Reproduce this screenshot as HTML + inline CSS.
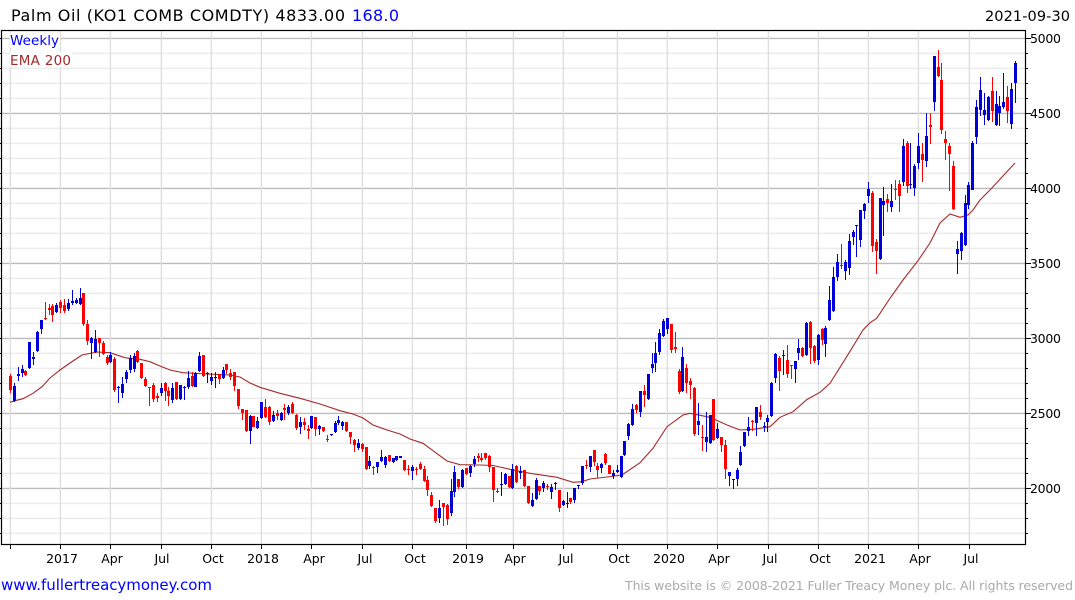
<!DOCTYPE html>
<html><head><meta charset="utf-8"><title>Palm Oil</title>
<style>html,body{margin:0;padding:0;background:#fff;width:1075px;height:600px;overflow:hidden}svg{display:block}text{font-family:"DejaVu Sans","Liberation Sans",sans-serif}</style>
</head><body>
<svg id="c" xmlns="http://www.w3.org/2000/svg" width="1075" height="600" viewBox="0 0 1075 600">
<g id="grid"></g>
<rect x="10" y="33" width="50" height="15" fill="#fff"/>
<rect x="10" y="52" width="62" height="15" fill="#fff"/>
<polyline id="ema" fill="none" stroke="#a52a2a" stroke-width="1.1" points="10,402.3 15,400.7 23,398.7 33,393.3 42,386.7 50,378 60,370 70,363 82,355 97,352 110,352.7 125,357.7 140,359.3 150,361.7 160,366 170,370 183,372.7 207,374 230,375 240,377 250,383 260,387.3 280,393.3 300,398.3 320,404 340,410.7 353,414 363,418 373,425 387,430 400,434 410,439 423,443.3 433,450.7 447,461 460,464.7 480,465 493,465.5 513,470 530,473.3 557,477.3 573,482.3 582,481.7 590,479 607,477 622,475 640,462.7 653,448.3 667,426.7 683,415 690,413.3 710,417.3 727,425 740,430 753,429.3 770,426.7 780,417.3 793,411.7 807,399.5 820,392.3 830,383.3 846.7,356.7 863,330 870,322.7 876.7,318.3 890,298.3 903,280 918,260.7 930,243 940,223 950,214 960,217.3 968,215 973,210 980,200 990,190 1015,163"/>
<g id="cand" shape-rendering="crispEdges"></g>
<rect x="1.5" y="30.5" width="1024" height="514" fill="none" stroke="#000" stroke-width="1.2"/>
<g id="ticks" stroke="#000" stroke-width="1" shape-rendering="crispEdges"></g>
<text x="11" y="21" font-size="16" textLength="334" lengthAdjust="spacing" fill="#000">Palm Oil (KO1 COMB COMDTY) 4833.00</text>
<text x="352" y="21" font-size="16" textLength="47" lengthAdjust="spacing" fill="#0000ff">168.0</text>
<text x="985" y="21" font-size="14.5" textLength="85" lengthAdjust="spacing" fill="#000">2021-09-30</text>
<text x="10" y="45" font-size="13.5" textLength="49" lengthAdjust="spacing" fill="#0000ff">Weekly</text>
<text x="10" y="65" font-size="13.5" textLength="61" lengthAdjust="spacing" fill="#a52a2a">EMA 200</text>
<g font-size="12.5" fill="#000">
<text x="1030" y="43" textLength="31">5000</text>
<text x="1030" y="118" textLength="31">4500</text>
<text x="1030" y="193" textLength="31">4000</text>
<text x="1030" y="268" textLength="31">3500</text>
<text x="1030" y="343" textLength="31">3000</text>
<text x="1030" y="418" textLength="31">2500</text>
<text x="1030" y="493" textLength="31">2000</text>
</g>
<g font-size="12.5" fill="#000" text-anchor="middle">
<text x="62" y="563">2017</text><text x="112" y="563">Apr</text><text x="162" y="563">Jul</text><text x="213" y="563">Oct</text><text x="263" y="563">2018</text><text x="314" y="563">Apr</text><text x="365" y="563">Jul</text><text x="415" y="563">Oct</text><text x="468" y="563">2019</text><text x="515" y="563">Apr</text><text x="566" y="563">Jul</text><text x="619" y="563">Oct</text><text x="669" y="563">2020</text><text x="719" y="563">Apr</text><text x="770" y="563">Jul</text><text x="820" y="563">Oct</text><text x="870" y="563">2021</text><text x="920" y="563">Apr</text><text x="971" y="563">Jul</text>
</g>
<text x="1" y="590" font-size="15" textLength="211" lengthAdjust="spacing" fill="#0000ff">www.fullertreacymoney.com</text>
<text x="625" y="590" font-size="12.5" textLength="448" lengthAdjust="spacing" fill="#aaaaaa">This website is © 2008-2021 Fuller Treacy Money plc. All rights reserved</text>
</svg>
<script>
var NS="http://www.w3.org/2000/svg";
function add(p,t,a){var e=document.createElementNS(NS,t);for(var k in a)e.setAttribute(k,a[k]);p.appendChild(e);}
var g=document.getElementById("grid"),tk=document.getElementById("ticks"),cd=document.getElementById("cand");
var y,i;
for(i=0;;i++){y=38.4+15*i;if(y>544)break;
 var maj=i%5==0;
 add(g,"line",{x1:2,x2:1025,y1:y,y2:y,stroke:maj?"#bcbcbc":"#ececec","stroke-width":maj?1.4:1.5});
 add(tk,"line",{x1:1026,x2:maj?1031:1028,y1:Math.floor(y)+.5,y2:Math.floor(y)+.5});
 add(tk,"line",{x1:0,x2:2,y1:Math.floor(y)+.5,y2:Math.floor(y)+.5});
}
var vs=[10.4,60.4,110.4,161.4,211.4,261.4,311.4,362.4,412.4,466.4,513.4,563.4,617.4,667.4,717.4,768.4,818.4,868.4,918.4,969.4];
vs.forEach(function(x){
 add(g,"line",{x1:x,x2:x,y1:31,y2:544,stroke:"#dedede","stroke-width":1.4});
 add(tk,"line",{x1:Math.floor(x)+.5,x2:Math.floor(x)+.5,y1:544,y2:549});
});
var segs=[
[280,"r282,338,288,330 b310,366,318,364 b262,302,282,288 b255,290,266,280 r270,288,274,286 b186,266,186,264 b215,255,231,237 b152,216,155,213 b120,162,120,147 r66,120,114,118 r72,105,84,90 r72,125,78,105 b70,100,75,97 r60,98,66,84 r58,100,75,93 b58,92,69,87 b30,75,63,69 b55,72,60,69 b24,75,54,72 r39,138,39,132 r120,195,132,183 b170,236,173,189 b150,220,177,217 r174,230,174,189 r182,225,189,222 r225,255,231,249 b215,248,225,246 r232,335,237,330 b318,368,321,323 b290,355,312,339 b270,310,276,297 b225,280,234,270 b220,275,228,267 r210,250,213,246 r250,298,250,294 r290,320,297,318 r320,378,321,325 r310,365,316,357 r340,365,348,354 b310,348,324,339 r307,363,309,334 r320,378,333,348 b308,368,324,360 r305,360,306,357 b316,360,316,357 b318,360,320,322 b274,326,294,321 r275,320,288,318 b275,322,279,321 b216,276,228,273 r225,290,225,288 b276,310,278,280 b280,315,291,303 b275,324,291,293 r282,312,282,297 b262,296,270,294 r252,282,252,270 r268,300,280,291 r276,332,276,318 r327,386,327,378 r388,420,388,398"],
[380,"r90,155,90,153 b105,191,108,153 r107,142,108,141 b112,147,123,144 b65,117,66,114 r57,115,81,111 r78,135,81,126 b93,127,105,123 r90,121,99,108 b96,123,99,120 r72,121,84,90 b75,105,81,99 r66,102,72,99 r102,150,105,144 b112,162,126,141 r114,150,126,135 r135,177,147,152 b108,147,108,144 r110,168,111,147 b135,165,138,147 r141,156,141,153 r166,186,177,180 b162,168,162,165 b123,158,129,156 b108,135,120,129 b123,150,126,138 r126,156,126,153 r156,192,156,171 r177,216,180,195 b177,210,189,204 r189,216,192,207 r201,270,201,267 b228,267,243,258 r258,285,261,264 b246,280,246,261 b210,246,231,243 b228,264,231,255 r225,246,225,243 b234,250,234,246 b228,243,228,240 b228,235,228,234 r240,274,240,270 r255,285,267,270 b255,300,261,273 r261,285,267,270 r246,270,252,267 r258,306,267,303 r288,348,300,330 r336,381,345,378 r384,430,384,423 b360,430,384,414 r369,438,369,381 r372,435,375,417 b297,408,333,399 b258,351,276,336 r297,327,297,321 b267,324,270,321 r264,285,264,282 b255,291,258,279 b228,261,237,252 r219,246,228,234 r219,246,234,240 r219,240,219,234 r225,276,228,261 r261,366,261,330 r324,340,332,336"],
[400,"b215,288,252,255 b220,255,222,252 r228,265,228,262 b192,267,206,264 r195,250,198,246 b198,237,213,219 r210,260,210,258 r258,312,258,309 b280,320,300,318 b234,300,240,297 r258,285,258,273 b243,276,249,264 r252,270,258,261 b252,297,261,276 b246,270,250,252 r270,336,270,323 b300,318,303,315 b276,324,308,311 r294,312,294,306 b264,309,264,300 b255,267,255,258 b198,254,198,250 r180,207,195,198 b168,216,168,201 r150,198,150,186 r190,235,198,210 b190,220,192,204 r159,195,162,189 r195,222,195,222 b210,237,219,228 b195,218,210,216 b168,234,168,231"],
[310,"b393,438,393,435 b338,390,342,378 b282,348,297,345 r282,310,285,300 b243,320,243,306 r225,291,243,255 b192,270,192,267 b129,189,162,174 b96,186,129,159 b57,135,69,126 b27,81,33,78 b24,72,24,57 r42,130,42,120 r66,128,111,117 r178,252,183,246 b111,246,141,243 r162,249,174,219 r204,267,213,225 r232,378,234,372 b279,375,333,345 r345,423,382,385 b306,426,381,396 b315,402,315,399 r267,393,267,390 b339,387,357,384 r381,426,381,405 r390,507,405,477 b486,528,486,498 b507,537,507,509 b475,528,480,507 b408,468,426,465 b366,411,366,408 b321,378,351,363 r330,362,333,337 b291,378,291,339 r285,330,306,321 b336,366,348,351 b315,366,324,336 b216,321,219,318 b129,219,132,204 r138,243,144,183 b120,195,135,138 r105,205,150,192 r165,207,165,168 b153,219,153,177 b87,150,114,129 r110,142,114,138 b36,138,39,135 r33,162,36,114 r105,160,108,153 b72,165,75,150"],
[170,"r475,525,477,510 b468,560,474,522 b348,453,390,450 b290,426,321,423 b252,333,276,321 r222,297,285,288 b270,330,276,303 b192,315,213,294 b180,225,186,201 b165,260,165,168 b120,232,120,210 b100,147,102,123 b36,98,57,78 r63,245,69,228 r207,312,216,243 b84,270,84,267 b52,198,93,105 r72,126,87,99 b42,126,93,111 r30,90,57,60 r30,126,42,78"],
[0,"b417,558,438,546 r423,579,429,558 b429,567,552,555 b492,588,498,564 b399,507,438,489 r429,546,462,480 b339,501,408,483 r339,432,375,381 r189,432,375,381"]
];
/* final real-pixel candles n232..n261 given as y*1 below */
var last="b139,186,146,182 r141,193,143,186 b143,189,184,185 b164,196,166,188 b133,169,146,163 r143,182,154,160 b113,167,136,161 r113,144,125,127 b56,111,56,102 r50,77,67,76 r63,134,80,130 r131,160,139,143 r143,191,146,154 r161,210,166,209 b241,274,249,254 b232,260,233,251 b195,246,203,245 b182,209,185,205 b141,190,143,190 b100,144,107,137 b77,116,90,110 b93,125,110,115 b96,121,97,120 r77,122,91,111 b91,126,104,125 b96,126,106,113 b73,109,102,107 r86,123,97,111 b83,129,89,124 b61,103,63,83";
segs[5]=[0,last,1];
var n=0;
segs.forEach(function(s){
 var off=s[0],k=s[2]?1:1/3;
 s[1].split(" ").forEach(function(t){
  var col=t[0]=="r"?"#ff0000":"#0000d8";
  var v=t.slice(1).split(",").map(function(z){return Math.round(off+z*k);});
  var X=Math.floor(10.45+3.865*n);
  add(cd,"rect",{x:X,y:v[0],width:1,height:Math.max(1,v[1]-v[0]),fill:col});
  add(cd,"rect",{x:X-1,y:v[2],width:3,height:Math.max(1,v[3]-v[2]),fill:col});
  n++;
 });
});
</script>
</body></html>
